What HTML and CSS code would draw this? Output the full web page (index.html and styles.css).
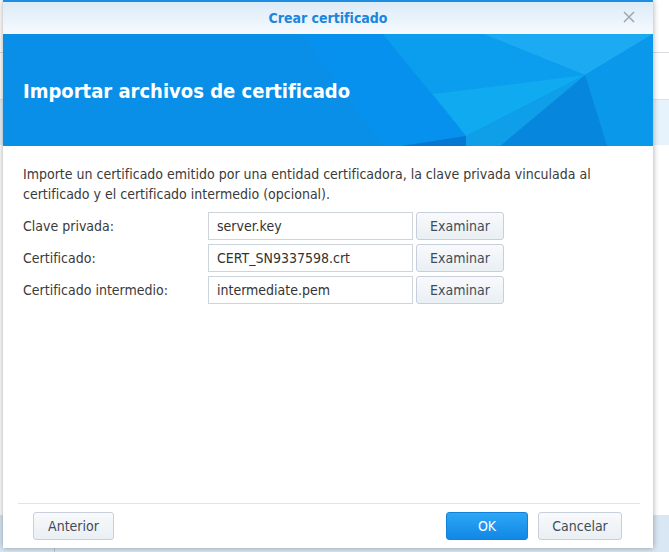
FILE: index.html
```html
<!DOCTYPE html>
<html lang="es">
<head>
<meta charset="utf-8">
<title>Crear certificado</title>
<link rel="stylesheet" href="styles.css">
</head>
<body>
<div class="bg">
  <div class="bg-top"></div>
  <div class="bg-row"></div>
  <div class="bg-row sel"></div>
  <div class="bg-fill"></div>
  <div class="bg-bottom"><div class="bg-side"></div></div>
</div>

<div class="dialog">
  <div class="titlebar">
    <span class="title">Crear certificado</span>
    <svg class="close" width="12" height="12" viewBox="0 0 12 12"><path d="M1 1 L11 11 M11 1 L1 11" stroke="#a0a6ac" stroke-width="1.5" fill="none"/></svg>
  </div>
  <div class="banner">
    <svg class="facets" viewBox="0 0 650 112" preserveAspectRatio="none">
      <polygon points="300,0 650,0 650,112 380,112" fill="#0791ee"/>
      <polygon points="480,0 650,0 582,41" fill="#22b0f3" opacity="0.8"/>
      <polygon points="582,41 650,0 650,112 604,112" fill="#0a98ea"/>
      <polygon points="582,41 604,112 497,112" fill="#0786de"/>
      <polygon points="582,41 497,112 463,112 463,102" fill="#0f9fe9"/>
      <polygon points="463,102 463,112 398,112" fill="#0478d2"/>
      <polygon points="380,0 480,0 582,41 463,102" fill="#10a6ef" opacity="0.6"/>
      <polygon points="430,60 582,41 463,102" fill="#12b6f0" opacity="0.5"/>
    </svg>
    <h1 class="banner-title">Importar archivos de certificado</h1>
  </div>
  <div class="content">
    <p class="desc">Importe un certificado emitido por una entidad certificadora, la clave privada vinculada al certificado y el certificado intermedio (opcional).</p>
    <div class="form">
      <label class="lbl">Clave privada:</label>
      <div class="field">server.key</div>
      <button class="btn">Examinar</button>
      <label class="lbl">Certificado:</label>
      <div class="field">CERT_SN9337598.crt</div>
      <button class="btn">Examinar</button>
      <label class="lbl">Certificado intermedio:</label>
      <div class="field">intermediate.pem</div>
      <button class="btn">Examinar</button>
    </div>
  </div>
  <div class="footer">
    <button class="btn foot">Anterior</button>
    <div class="spacer"></div>
    <button class="btn foot ok">OK</button>
    <button class="btn foot cancel">Cancelar</button>
  </div>
</div>
</body>
</html>
```
FILE: styles.css
```css
* { box-sizing: border-box; }
html, body { margin: 0; padding: 0; }
body {
  width: 669px;
  height: 552px;
  overflow: hidden;
  position: relative;
  background: #ffffff;
  font-family: "DejaVu Sans Condensed", "DejaVu Sans", sans-serif;
}
.bg { display: flex; flex-direction: column; height: 552px; }
.bg-top { height: 53px; border-bottom: 1px solid #d9dde2; }
.bg-row { height: 46px; }
.bg-row.sel { background: #e6f2fc; border-top: 1px solid #d5e3ef; }
.bg-fill { flex: 1; }
.bg-bottom { height: 37px; background: #d8e7f3; display: flex; }
.bg-side { width: 55px; border-right: 1px solid #b9c5cf; }

.dialog {
  position: absolute;
  left: 3px;
  top: 0;
  width: 650px;
  height: 548px;
  background: #fff;
  display: flex;
  flex-direction: column;
  box-shadow: 0 0 6px rgba(0,0,0,0.35);
}
.titlebar {
  height: 34px;
  border-top: 2px solid #1c8fe4;
  background: linear-gradient(#dcebf8, #f6fafe);
  display: flex;
  align-items: center;
  justify-content: center;
  position: relative;
}
.title { font-weight: bold; font-size: 14px; color: #1a86dc; }
.close {
  position: absolute;
  right: 18px;
  top: 9px;
}
.banner {
  height: 112px;
  background: #0a8fe9;
  position: relative;
  display: flex;
  align-items: center;
  overflow: hidden;
}
.facets { position: absolute; left: 0; top: 0; width: 650px; height: 112px; }
.banner-title {
  position: relative;
  margin: 0 0 0 20px;
  font-size: 20px;
  font-weight: bold;
  color: #fff;
  padding-top: 2px;
}
.content { flex: 1; padding: 18px 20px 0 20px; }
.desc {
  margin: 0;
  font-size: 14px;
  line-height: 20px;
  color: #3a3a3a;
}
.form {
  margin-top: 8px;
  display: grid;
  grid-template-columns: 182px 205px 88px;
  column-gap: 3px;
  row-gap: 4px;
  align-items: center;
}
.lbl { font-size: 14px; color: #3a3a3a; }
.field {
  height: 28px;
  border: 1px solid #ccd4dc;
  padding: 0 8px;
  font-size: 14px;
  line-height: 26px;
  color: #333;
}
.btn {
  height: 28px;
  border: 1px solid #c7d0da;
  border-radius: 3px;
  background: linear-gradient(#f8fafc, #eaeff4);
  font-family: inherit;
  font-size: 14px;
  color: #404c58;
  padding: 0;
}
.footer {
  margin: 0 13px 0 15px;
  border-top: 1px solid #e2e4e6;
  padding: 8px 18px 8px 15px;
  display: flex;
  gap: 10px;
}
.spacer { flex: 1; }
.foot { width: 81px; }
.ok {
  width: 82px;
  background: linear-gradient(#2ea6f5, #1088e6);
  border-color: #1282d8;
  color: #fff;
}
.cancel { width: 84px; }
```
